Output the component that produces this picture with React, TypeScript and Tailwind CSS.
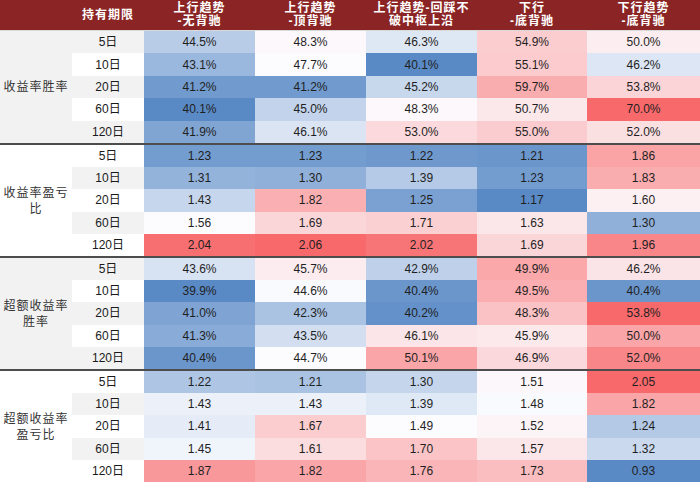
import React from "react";

type Group = {
  label: React.ReactNode;
  labelGray: boolean;
  pct: boolean;
  rows: number[][];
};

const periods = ["5日", "10日", "20日", "60日", "120日"];

const groups: Group[] = [
  {
    label: <>收益率胜率</>,
    labelGray: true,
    pct: true,
    rows: [
      [44.5, 48.3, 46.3, 54.9, 50.0],
      [43.1, 47.7, 40.1, 55.1, 46.2],
      [41.2, 41.2, 45.2, 59.7, 53.8],
      [40.1, 45.0, 48.3, 50.7, 70.0],
      [41.9, 46.1, 53.0, 55.0, 52.0],
    ],
  },
  {
    label: (
      <>
        收益率盈亏
        <br />
        比
      </>
    ),
    labelGray: false,
    pct: false,
    rows: [
      [1.23, 1.23, 1.22, 1.21, 1.86],
      [1.31, 1.3, 1.39, 1.23, 1.83],
      [1.43, 1.82, 1.25, 1.17, 1.6],
      [1.56, 1.69, 1.71, 1.63, 1.3],
      [2.04, 2.06, 2.02, 1.69, 1.96],
    ],
  },
  {
    label: (
      <>
        超额收益率
        <br />
        胜率
      </>
    ),
    labelGray: true,
    pct: true,
    rows: [
      [43.6, 45.7, 42.9, 49.9, 46.2],
      [39.9, 44.6, 40.4, 49.5, 40.4],
      [41.0, 42.3, 40.2, 48.3, 53.8],
      [41.3, 43.5, 46.1, 45.9, 50.0],
      [40.4, 44.7, 50.1, 46.9, 52.0],
    ],
  },
  {
    label: (
      <>
        超额收益率
        <br />
        盈亏比
      </>
    ),
    labelGray: false,
    pct: false,
    rows: [
      [1.22, 1.21, 1.3, 1.51, 2.05],
      [1.43, 1.43, 1.39, 1.48, 1.82],
      [1.41, 1.67, 1.49, 1.52, 1.24],
      [1.45, 1.61, 1.7, 1.57, 1.32],
      [1.87, 1.82, 1.76, 1.73, 0.93],
    ],
  },
];

const LO = [90, 138, 198];
const MID = [252, 252, 255];
const HI = [248, 105, 107];

function scale(v: number, min: number, med: number, max: number): string {
  let a: number[], b: number[], t: number;
  if (v <= med) {
    a = LO;
    b = MID;
    t = med === min ? 1 : (v - min) / (med - min);
  } else {
    a = MID;
    b = HI;
    t = max === med ? 0 : (v - med) / (max - med);
  }
  const c = a.map((x, i) => Math.round(x + (b[i] - x) * t));
  return `rgb(${c[0]},${c[1]},${c[2]})`;
}

const GRID = "grid grid-cols-[72px_72px_111px_111px_111px_110px_113px]";
const FONT = { fontFamily: '"Liberation Sans", "Noto Sans CJK SC", Arial, sans-serif' };

export default function App() {
  const headers = [
    ["上行趋势", "-无背驰"],
    ["上行趋势", "-顶背驰"],
    ["上行趋势-回踩不", "破中枢上沿"],
    ["下行", "-底背驰"],
    ["下行趋势", "-底背驰"],
  ];
  return (
    <div className="w-[700px] h-[482px] bg-white overflow-hidden" style={FONT}>
      <div className={`${GRID} h-[30px] bg-[#8B2525] text-white font-bold text-[12px] leading-[13px] tracking-[1px]`}>
        <div />
        <div className="flex items-center justify-center">持有期限</div>
        {headers.map((h, i) => (
          <div key={i} className="flex flex-col items-center justify-center">
            <span>{h[0]}</span>
            <span>{h[1]}</span>
          </div>
        ))}
      </div>
      {groups.map((g, gi) => {
        const all = g.rows.flat().slice().sort((a, b) => a - b);
        const min = all[0];
        const max = all[all.length - 1];
        const med = all[Math.floor(all.length / 2)];
        return (
          <div
            key={gi}
            className={`${GRID} grid-rows-5 h-[113px] ${
              gi === 0 ? "border-t border-[#d9d9d9]" : "border-t-2 border-[#4d4d4d]"
            }`}
          >
            <div
              className={`row-span-5 flex items-center justify-center text-center text-[12px] leading-[16px] tracking-[1px] text-[#333] ${
                g.labelGray ? "bg-[#f2f2f2]" : "bg-white"
              }`}
              style={{ gridRow: "1 / span 5", gridColumn: 1 }}
            >
              <span>{g.label}</span>
            </div>
            {g.rows.map((r, ri) => {
              const gray = g.labelGray ? ri % 2 === 0 : ri % 2 === 1;
              return (
                <React.Fragment key={ri}>
                  <div
                    className={`flex items-center justify-center text-[12px] text-[#1a1a1a] ${
                      gray ? "bg-[#f2f2f2]" : "bg-white"
                    }`}
                    style={{ gridRow: ri + 1, gridColumn: 2 }}
                  >
                    {periods[ri]}
                  </div>
                  {r.map((v, ci) => (
                    <div
                      key={ci}
                      className="flex items-center justify-center text-[12px] text-[#1f1f1f]"
                      style={{
                        gridRow: ri + 1,
                        gridColumn: ci + 3,
                        backgroundColor: scale(v, min, med, max),
                      }}
                    >
                      {g.pct ? `${v.toFixed(1)}%` : v.toFixed(2)}
                    </div>
                  ))}
                </React.Fragment>
              );
            })}
          </div>
        );
      })}
    </div>
  );
}
